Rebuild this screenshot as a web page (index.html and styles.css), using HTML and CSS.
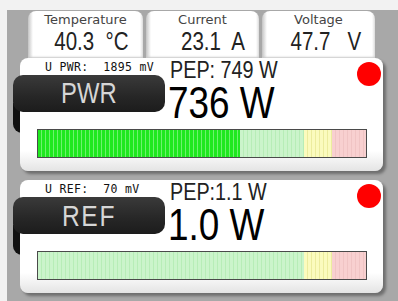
FILE: index.html
```html
<!DOCTYPE html>
<html lang="en">
<head>
  <meta charset="UTF-8">
  <title>RF Power Meter</title>
  <link rel="stylesheet" href="styles.css">
</head>
<body>

  <div class="screen">
    <div class="tabs">
      <div class="tab">
        <div class="tab-label">Temperature</div>
        <div class="tab-value"><span class="narrow">40.3  °C</span></div>
      </div>
      <div class="tab">
        <div class="tab-label">Current</div>
        <div class="tab-value"><span class="narrow">23.1  A</span></div>
      </div>
      <div class="tab">
        <div class="tab-label">Voltage</div>
        <div class="tab-value"><span class="narrow">47.7   V</span></div>
      </div>
    </div>

    <div class="panel">
      <div class="panel-head">
        <div class="panel-left">
          <div class="mv">U PWR:  1895 mV</div>
          <div class="badge"><span class="narrow">PWR</span></div>
        </div>
        <div class="panel-right">
          <div class="pep"><span class="narrow">PEP: 749 W</span></div>
          <div class="big"><span class="narrow">736 W</span></div>
        </div>
      </div>
      <span class="led"></span>
      <div class="bar">
        <div class="seg seg-green" style="width: 202px"></div>
        <div class="seg seg-light"></div>
        <div class="seg seg-yellow"></div>
        <div class="seg seg-red"></div>
      </div>
    </div>

    <div class="panel">
      <div class="panel-head">
        <div class="panel-left">
          <div class="mv">U REF:  70 mV</div>
          <div class="badge badge-ref"><span class="narrow">REF</span></div>
        </div>
        <div class="panel-right">
          <div class="pep"><span class="narrow">PEP:1.1 W</span></div>
          <div class="big"><span class="narrow">1.0 W</span></div>
        </div>
      </div>
      <span class="led"></span>
      <div class="bar">
        <div class="seg seg-green" style="width: 0px"></div>
        <div class="seg seg-light seg-light-full"></div>
        <div class="seg seg-yellow"></div>
        <div class="seg seg-red"></div>
      </div>
    </div>
  </div>

</body>
</html>
```

FILE: styles.css
```css
* {
  box-sizing: border-box;
}

body {
  margin: 0;
  background: #f2f2f2;
  font-family: "Liberation Sans", Arial, sans-serif;
  color: #111;
}

/* no narrow face installed, so squeeze the regular one */
.narrow {
  display: inline-block;
  transform: scaleX(0.82);
  transform-origin: left center;
  white-space: pre;
}

.screen {
  position: relative;
  z-index: 0;
  margin: 10px 0 0 7px;
  height: 291px;
  background: #a8a8a8;
}

/* top tabs */
.tabs {
  display: flex;
  gap: 3px;
  padding: 1px 0 0 21px;
}

.tab {
  width: 113px;
  height: 47px;
  padding: 1px 14px 0 4px;
  border-radius: 8px 8px 0 0;
  background: linear-gradient(to right, #c4c4c4, #fff 5px, #fff calc(100% - 3px), #ddd);
  box-shadow: inset 0 -2px 2px -1px #c8c8c8;
}

.tab:first-child {
  width: 115px;
}

.tab-label {
  padding-left: 10px;
  font-family: "DejaVu Sans", sans-serif;
  font-size: 13px;
  line-height: 16px;
  color: #444;
  text-align: center;
}

.tab-value {
  font-size: 25px;
  line-height: 26px;
  color: #222;
  text-align: right;
}

.tab-value .narrow {
  transform-origin: right center;
}

/* meter panels */
.panel {
  position: relative;
  width: 363px;
  height: 113px;
  margin-left: 13px;
  border-radius: 8px;
  background: linear-gradient(#fff 82%, #e4e4e4);
  box-shadow: 3px 3px 3px rgba(0, 0, 0, 0.35);
}

.panel + .panel {
  margin-top: 9px;
}

.panel-head {
  display: flex;
  height: 67px;
}

.panel-left {
  width: 150px;
}

.mv {
  height: 17px;
  padding: 1px 0 0 25px;
  font-family: "DejaVu Sans Mono", monospace;
  font-size: 11.5px;
  line-height: 16px;
  letter-spacing: 0.35px;
  color: #111;
  white-space: pre;
}

.badge {
  position: relative;
  width: 152px;
  height: 37px;
  margin-left: -7px;
  border-radius: 10px;
  background: linear-gradient(#3a3a3a, #262626 60%, #1c1c1c);
  color: #d6d6d6;
  font-size: 29px;
  line-height: 37px;
  text-align: center;
}

.badge .narrow {
  transform-origin: center;
}

.badge::after {
  content: "";
  position: absolute;
  z-index: -1;
  left: 0;
  top: 28px;
  width: 14px;
  height: 30px;
  border-radius: 0 0 0 9px;
  background: #111;
}

.badge-ref {
  font-size: 30px;
  letter-spacing: 2px;
}

.pep {
  margin-top: 1px;
  font-size: 23px;
  line-height: 22px;
  color: #222;
}

.pep .narrow {
  transform: scaleX(0.86);
}

.big {
  margin: -1px 0 0 -2px;
  font-size: 45px;
  line-height: 45px;
  color: #000;
}

.led {
  position: absolute;
  top: 4px;
  right: 2px;
  width: 24px;
  height: 24px;
  border-radius: 50%;
  background: #f00;
}

/* level bar */
.bar {
  display: flex;
  width: 330px;
  height: 29px;
  margin: 4px 0 0 17px;
  border: 1px solid #4a4a4a;
}

.seg {
  height: 100%;
}

.seg-green {
  background: repeating-linear-gradient(to right, #1fe81f 0, #1fe81f 3px, #6ef26e 3px, #6ef26e 4px);
}

.seg-light {
  width: 64px;
  background: repeating-linear-gradient(to right, #cbf4cb 0, #cbf4cb 3px, #b7edb7 3px, #b7edb7 4px);
}

.seg-light-full {
  width: 266px;
}

.seg-yellow {
  width: 28px;
  background: repeating-linear-gradient(to right, #fbfbbe 0, #fbfbbe 3px, #ecec9e 3px, #ecec9e 4px);
}

.seg-red {
  width: 34px;
  background: repeating-linear-gradient(to right, #f8d0d0 0, #f8d0d0 3px, #f0c4c4 3px, #f0c4c4 4px);
}
```
